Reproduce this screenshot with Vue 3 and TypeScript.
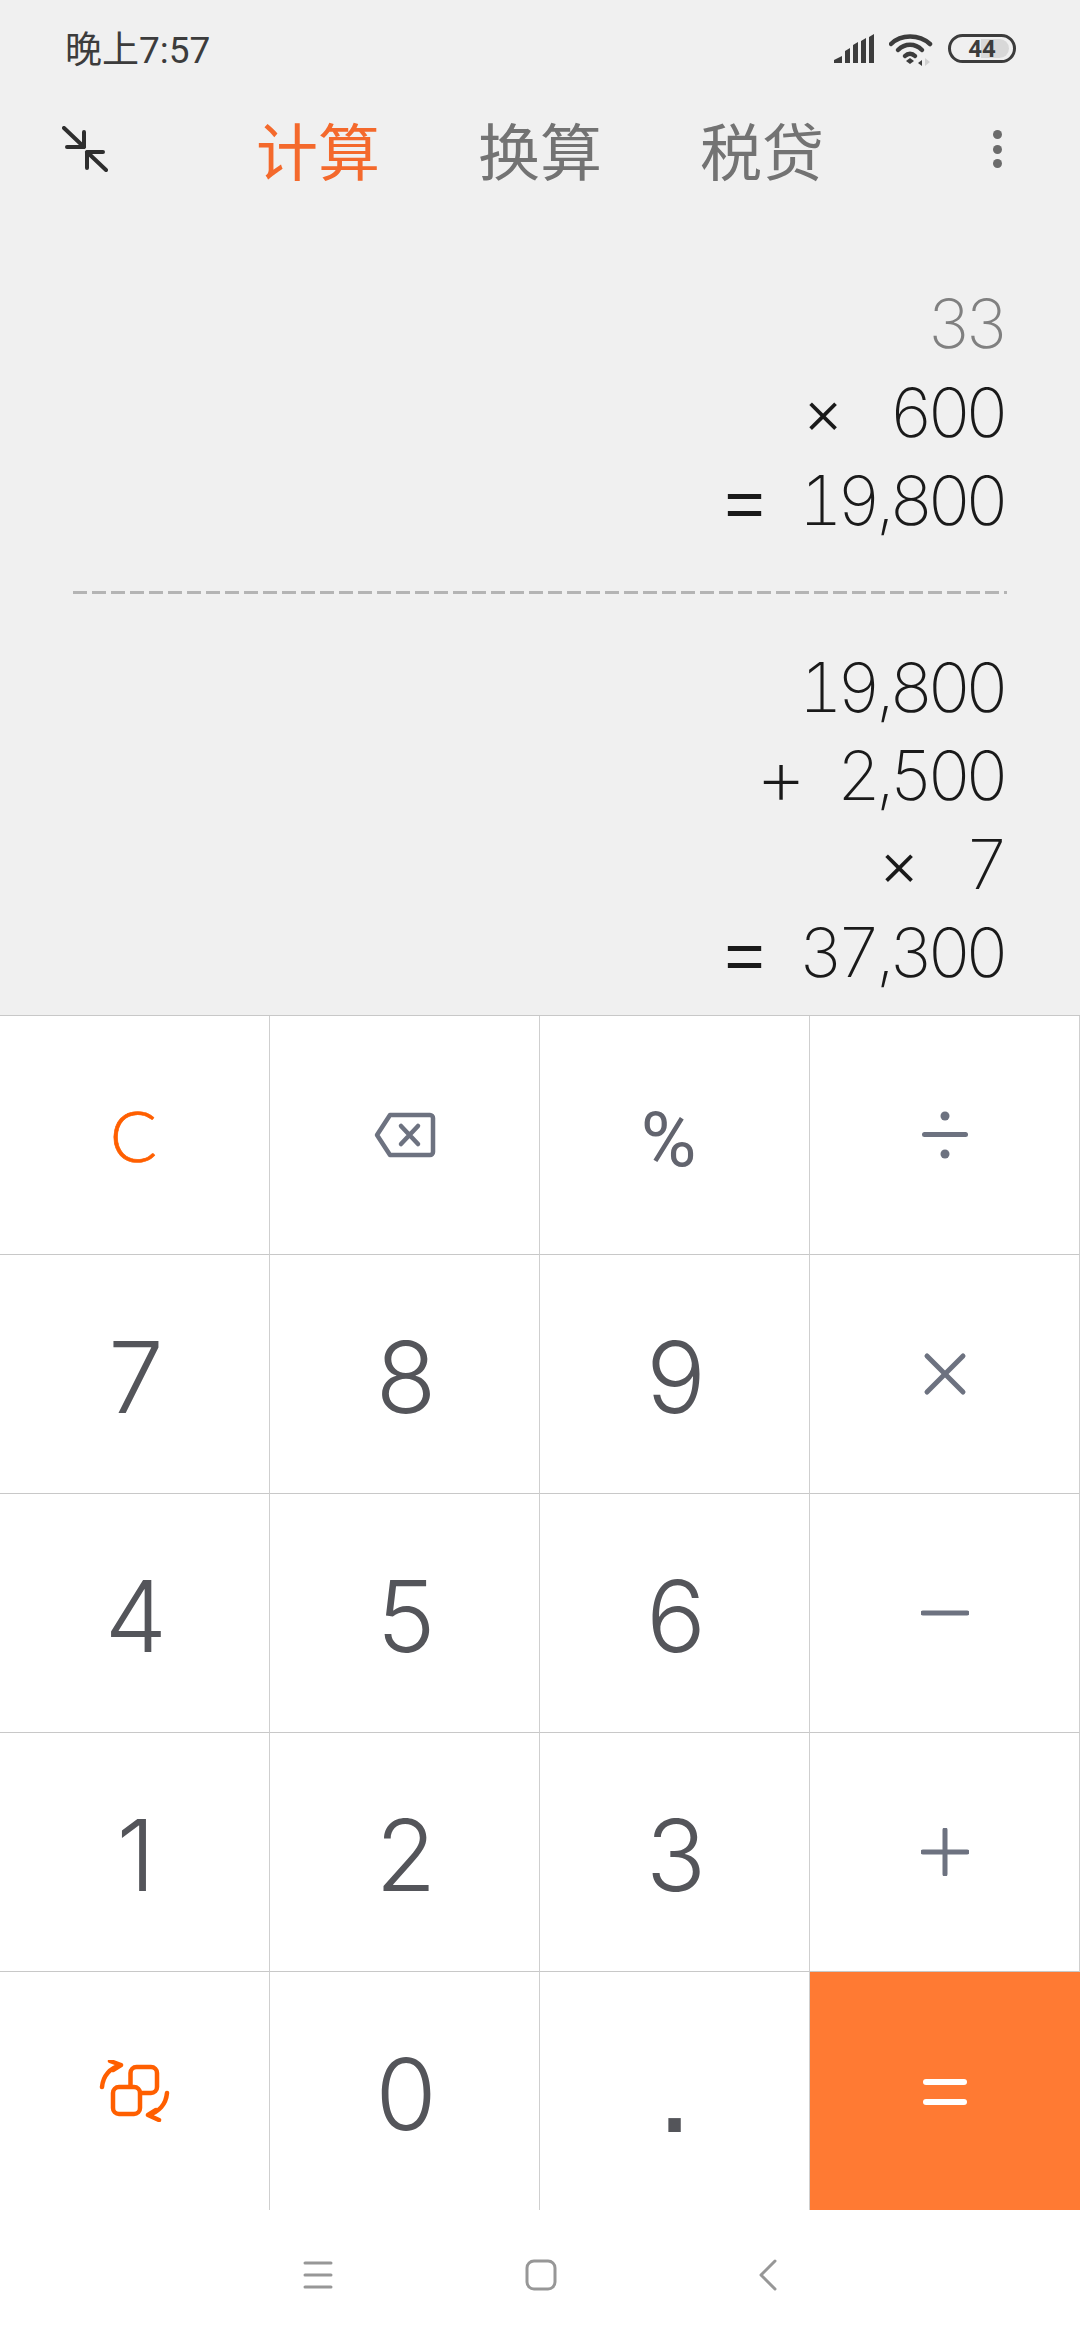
<template>
  <div class="app">
    <div class="status">
      <span class="time">晚上7:57</span>
      <div class="status-icons">
        <svg width="40" height="30" viewBox="0 0 40 30" fill="#3c3c3c">
          <path d="M0 29v-3l8-4v7zM11 29V17l5-3v15zM19 29V11l5-3v21zM27 29V7l5-3v25zM35 29V3l5-3v29z" />
        </svg>
        <svg class="wifi" width="44" height="33" viewBox="0 0 44 33" fill="none" stroke="#3c3c3c" stroke-width="4.5" stroke-linecap="round">
          <path d="M2 10C12 0 30 0 41 10" />
          <path d="M9 16C16 9 26 9 33 16" />
          <path d="M16 22C19 19 23 19 26 22" />
          <path d="M21 24l-4 3 4 3 4-3z" fill="#3c3c3c" stroke="none" />
          <path d="M33 26v6l-4-3z" fill="#3c3c3c" stroke="none" />
          <path d="M36 24v8l5-4z" fill="#d0d0d0" stroke="none" />
        </svg>
        <div class="battery">
          <span class="battery-fill"></span>
          <span class="battery-text">44</span>
        </div>
      </div>
    </div>

    <div class="tabs">
      <div class="side">
        <svg width="46" height="46" viewBox="0 0 46 46" fill="none" stroke="#2e2e2e" stroke-width="4" stroke-linecap="round" stroke-linejoin="round">
          <path d="M2 2l20 19M22 6v15H5" />
          <path d="M44 44L25 26M25 42V26h16" />
        </svg>
      </div>
      <div class="tab-list">
        <span v-for="(tab, i) in tabs" :key="tab" class="tab" :class="{ active: i === 0 }">{{ tab }}</span>
      </div>
      <div class="side more">
        <i></i><i></i><i></i>
      </div>
    </div>

    <div class="display">
      <div class="block">
        <div v-for="(line, i) in firstLines" :key="i" class="line" :class="{ muted: i === 0 }">
          <span v-if="line.op" class="op" :class="opClass(line.op)">{{ line.op }}</span>
          <span>
            <template v-for="(part, j) in line.num.split(',')" :key="j"><span v-if="j" class="comma">,</span>{{ part }}</template>
          </span>
        </div>
      </div>
      <div class="dashed"></div>
      <div class="block">
        <div v-for="(line, i) in secondLines" :key="i" class="line">
          <span v-if="line.op" class="op" :class="opClass(line.op)">{{ line.op }}</span>
          <span>
            <template v-for="(part, j) in line.num.split(',')" :key="j"><span v-if="j" class="comma">,</span>{{ part }}</template>
          </span>
        </div>
      </div>
    </div>

    <div class="keypad">
      <div class="key">
        <span class="clear">C</span>
      </div>
      <div class="key">
        <svg width="62" height="46" viewBox="0 0 62 46" fill="none" stroke="#6d7280" stroke-width="4.5" stroke-linejoin="round" stroke-linecap="round">
          <path d="M16 3H56a3 3 0 0 1 3 3V40a3 3 0 0 1-3 3H16L3 23z" />
          <path d="M27 14l17 18M44 14L27 32" />
        </svg>
      </div>
      <div class="key">
        <span class="percent">%</span>
      </div>
      <div class="key">
        <svg width="48" height="48" viewBox="0 0 48 48" fill="#6d7280">
          <rect x="1" y="21" width="46" height="5" rx="2.5" />
          <circle cx="24" cy="5" r="4.5" />
          <circle cx="24" cy="43" r="4.5" />
        </svg>
      </div>
      <template v-for="row in digitRows" :key="row.digits[0]">
        <div v-for="d in row.digits" :key="d" class="key digit">{{ d }}</div>
        <div class="key">
          <svg width="48" height="48" viewBox="0 0 48 48" fill="none" stroke="#6d7280" stroke-width="5" stroke-linecap="round">
            <path v-for="p in row.paths" :key="p" :d="p" />
          </svg>
        </div>
      </template>
      <div class="key">
        <svg width="72" height="62" viewBox="0 0 72 62" fill="none" stroke="#ff5f00" stroke-width="4.5" stroke-linecap="round" stroke-linejoin="round">
          <rect x="14" y="27" width="27" height="27" rx="6" />
          <path d="M31.5 25V13a6 6 0 0 1 6-6H52a6 6 0 0 1 6 6V27a6 6 0 0 1-6 6H43" />
          <path d="M3 27C4 16 11 8 22 5M11 1l11 4-8 5" />
          <path d="M68 33C67 44 60 52 49 55M60 60l-11-5 8-5" />
        </svg>
      </div>
      <div class="key digit">0</div>
      <div class="key dot">.</div>
      <div class="key equals">
        <svg width="44" height="26" viewBox="0 0 44 26" fill="#fff">
          <rect x="0" y="0" width="44" height="6" rx="3" />
          <rect x="0" y="20" width="44" height="6" rx="3" />
        </svg>
      </div>
    </div>

    <div class="nav">
      <svg width="30" height="28" viewBox="0 0 30 28" stroke="#979797" stroke-width="3" stroke-linecap="round">
        <path d="M2 2h26M2 14h26M2 26h26" />
      </svg>
      <svg width="32" height="32" viewBox="0 0 32 32" fill="none" stroke="#979797" stroke-width="3">
        <rect x="2" y="2" width="28" height="28" rx="7" />
      </svg>
      <svg class="back" width="18" height="32" viewBox="0 0 18 32" fill="none" stroke="#979797" stroke-width="3" stroke-linecap="round" stroke-linejoin="round">
        <path d="M16 2L2 16l14 14" />
      </svg>
    </div>
  </div>
</template>

<script setup lang="ts">
interface Line {
  op?: string;
  num: string;
}

const tabs = ["计算", "换算", "税贷"];

const firstLines: Line[] = [
  { num: "33" },
  { op: "×", num: "600" },
  { op: "=", num: "19,800" },
];

const secondLines: Line[] = [
  { num: "19,800" },
  { op: "+", num: "2,500" },
  { op: "×", num: "7" },
  { op: "=", num: "37,300" },
];

const digitRows = [
  { digits: ["7", "8", "9"], paths: ["M6 6l36 36", "M42 6L6 42"] },
  { digits: ["4", "5", "6"], paths: ["M2 24h44"] },
  { digits: ["1", "2", "3"], paths: ["M2 24h44", "M24 2v44"] },
];

const opClass = (op: string) => {
  if (op === "×") return "times";
  if (op === "=") return "eq";
  return "plus";
};
</script>

<style scoped>
.app {
  width: 1080px;
  height: 2340px;
  display: flex;
  flex-direction: column;
  background: #f0f0f0;
  font-family: Roboto, "Noto Sans CJK SC", sans-serif;
  overflow: hidden;
}

.status {
  height: 100px;
  box-sizing: border-box;
  padding: 28px 64px 0 65px;
  display: flex;
  justify-content: space-between;
  align-items: flex-start;
}

.time {
  font-size: 37px;
  line-height: 46px;
  color: #3c3c3c;
}

.status-icons {
  display: flex;
  align-items: flex-start;
  gap: 15px;
  padding-top: 6px;
}

.battery {
  position: relative;
  width: 68px;
  height: 29px;
  box-sizing: border-box;
  border: 3.5px solid #3c3c3c;
  border-radius: 15px;
  display: flex;
  align-items: center;
  justify-content: center;
  overflow: hidden;
}

.battery-fill {
  position: absolute;
  top: 2px;
  bottom: 2px;
  left: 30px;
  right: 4px;
  background: #d8d8d8;
  border-radius: 0 10px 10px 0;
}

.battery-text {
  position: relative;
  font-size: 24px;
  font-weight: 700;
  color: #3c3c3c;
}

.tabs {
  height: 104px;
  padding: 0 62px;
  display: flex;
  align-items: center;
}

.side {
  flex: none;
  width: 46px;
  margin-top: -6px;
  display: flex;
}

.tab-list {
  flex: 1;
  display: flex;
  justify-content: center;
  gap: 98px;
}

.tab {
  font-size: 62px;
  font-weight: 400;
  line-height: 72px;
  margin-top: 5px;
  color: #737373;
}

.tab.active {
  color: #f4692c;
}

.more {
  flex-direction: column;
  align-items: flex-end;
  gap: 5.5px;
  padding-right: 16px;
  box-sizing: border-box;
}

.more i {
  width: 9px;
  height: 9px;
  border-radius: 50%;
  background: #6b6b6b;
}

.display {
  flex: 1;
  box-sizing: border-box;
  padding: 75px 75px 0 73px;
}

.line {
  height: 88.5px;
  margin-right: 2px;
  display: flex;
  justify-content: flex-end;
  align-items: center;
  gap: 38px;
  font-family: Inter, Roboto, sans-serif;
  font-size: 68px;
  font-weight: 200;
  font-variant-numeric: tabular-nums;
  letter-spacing: -6px;
  color: #1a1a1a;
}

.line.muted {
  color: #808080;
}

.comma {
  margin: 0 1px;
}

.op {
  font-weight: 300;
}

.op.times {
  font-size: 62px;
  margin-right: 14px;
}

.op.eq {
  font-size: 82px;
  margin: -4px -4px 0 0;
}

.op.plus {
  font-size: 80px;
  font-weight: 200;
  margin-right: -2px;
}

.dashed {
  height: 3px;
  margin: 46px 0 49px;
  margin-right: -2px;
  background: repeating-linear-gradient(90deg, #b4b4b4 0 14px, transparent 14px 19px);
}

.keypad {
  height: 1195px;
  flex: none;
  display: grid;
  grid-template-columns: repeat(4, 270px);
  grid-auto-rows: 239px;
  background: #fff;
  border-top: 1px solid #c8c8c8;
  box-sizing: border-box;
}

.key {
  box-sizing: border-box;
  display: flex;
  align-items: center;
  justify-content: center;
  background: #fff;
  border-right: 1px solid #cfcfcf;
  border-bottom: 1px solid #c8c8c8;
}

.digit {
  padding: 6px 0 0 3px;
  font-family: Inter, Roboto, sans-serif;
  font-size: 99px;
  font-weight: 300;
  color: #54555a;
}

.dot {
  padding-bottom: 8px;
  font-family: "Liberation Sans", sans-serif;
  font-size: 130px;
  color: #54555a;
}

.clear {
  margin-right: 2px;
  font-family: Lato, sans-serif;
  font-size: 70px;
  font-weight: 300;
  -webkit-text-stroke: 0.6px #ff5f00;
  color: #ff5f00;
}

.percent {
  font-size: 76px;
  margin: 10px 12px 0 0;
  color: #62646e;
}

.equals {
  background: #ff7a33;
  border: none;
}

.nav {
  height: 130px;
  flex: none;
  background: #fff;
  display: flex;
  align-items: center;
  justify-content: center;
  gap: 192px;
}

.back {
  margin-left: 10px;
}
</style>

<style>
html,
body {
  margin: 0;
  background: #f0f0f0;
}
</style>
